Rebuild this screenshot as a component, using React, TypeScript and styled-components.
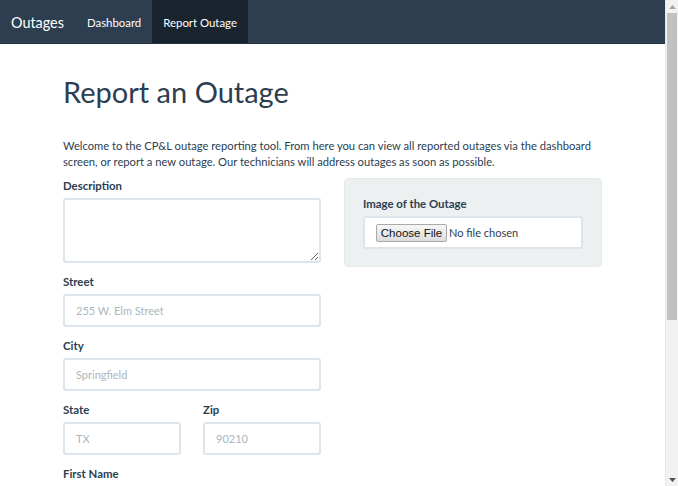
import styled, { createGlobalStyle } from 'styled-components';

const GlobalStyle = createGlobalStyle`
    html, body {
        margin: 0;
        padding: 0;
        background: #ffffff;
        font-family: Lato, "Open Sans", sans-serif;
        color: #2c3e50;
        overflow: hidden;
    }

    input::placeholder, textarea::placeholder {
        color: #acb6c0;
    }
`;

export default function App(): JSX.Element {
    return (
        <>
            <GlobalStyle />
            <Page>
                <Viewport>
                    <Navbar>
                        <Brand href="#">Outages</Brand>
                        <NavLink href="#">Dashboard</NavLink>
                        <NavLink href="#" $active>Report Outage</NavLink>
                    </Navbar>
                    <Container>
                        <Title>Report an Outage</Title>
                        <Intro>
                            Welcome to the CP&amp;L outage reporting tool. From here you can view all reported outages via the dashboard
                            screen, or report a new outage. Our technicians will address outages as soon as possible.
                        </Intro>
                        <Columns>
                            <div>
                                <FormGroup>
                                    <Label>Description</Label>
                                    <TextArea />
                                </FormGroup>
                                <FormGroup>
                                    <Label>Street</Label>
                                    <Input placeholder="255 W. Elm Street" />
                                </FormGroup>
                                <FormGroup>
                                    <Label>City</Label>
                                    <Input placeholder="Springfield" />
                                </FormGroup>
                                <SplitRow>
                                    <FormGroup>
                                        <Label>State</Label>
                                        <Input placeholder="TX" />
                                    </FormGroup>
                                    <FormGroup>
                                        <Label>Zip</Label>
                                        <Input placeholder="90210" />
                                    </FormGroup>
                                </SplitRow>
                                <FormGroup>
                                    <Label>First Name</Label>
                                    <Input placeholder="John" />
                                </FormGroup>
                                <FormGroup>
                                    <Label>Last Name</Label>
                                    <Input placeholder="Smith" />
                                </FormGroup>
                                <SubmitButton>Submit</SubmitButton>
                            </div>
                            <div>
                                <Panel>
                                    <Label>Image of the Outage</Label>
                                    <FileBox>
                                        <ChooseButton>Choose File</ChooseButton>
                                        <FileName>No file chosen</FileName>
                                    </FileBox>
                                </Panel>
                            </div>
                        </Columns>
                    </Container>
                </Viewport>
                <Scrollbar>
                    <ScrollButton>
                        <svg width="7" height="4" viewBox="0 0 7 4">
                            <path d="M0 4 L3.5 0 L7 4 Z" fill="#a3a3a3" />
                        </svg>
                    </ScrollButton>
                    <Thumb />
                    <ScrollTrack />
                    <ScrollButton>
                        <svg width="7" height="4" viewBox="0 0 7 4">
                            <path d="M0 0 L3.5 4 L7 0 Z" fill="#505050" />
                        </svg>
                    </ScrollButton>
                </Scrollbar>
            </Page>
        </>
    );
}

const Page = styled.div`
    display: flex;
    height: 100vh;
`;

const Viewport = styled.div`
    flex: 1;
    min-width: 0;
    overflow: hidden;
`;

const Scrollbar = styled.div`
    width: 13px;
    flex: none;
    display: flex;
    flex-direction: column;
    background: #f1f1f1;
    border-left: 1px solid #e6e6e6;
    box-sizing: border-box;
`;

const ScrollButton = styled.div`
    height: 13px;
    display: flex;
    align-items: center;
    justify-content: center;
`;

const Thumb = styled.div`
    height: 307px;
    margin: 0 1px;
    background: #c1c1c1;
`;

const ScrollTrack = styled.div`
    flex: 1;
`;

const Navbar = styled.nav`
    height: 44px;
    background: #2c3e50;
    display: flex;
    align-items: stretch;
    padding-left: 11px;
    border-bottom: 1px solid #243342;
    box-sizing: border-box;
`;

const Brand = styled.a`
    display: flex;
    align-items: center;
    padding-top: 1px;
    color: #ffffff;
    font-size: 14.4px;
    text-decoration: none;
    margin-right: 12px;
`;

const NavLink = styled.a<{ $active?: boolean }>`
    display: flex;
    align-items: center;
    padding: 1px 11px 0;
    color: #ffffff;
    font-size: 11.4px;
    text-decoration: none;
    background: ${({ $active }) => ($active ? '#1a242f' : 'transparent')};
`;

const Container = styled.main`
    width: 539px;
    margin: 0 auto;
    padding-bottom: 34px;
`;

const Title = styled.h1`
    font-size: 29px;
    font-weight: 400;
    line-height: 34px;
    margin: 31px 0 29px;
`;

const Intro = styled.p`
    font-size: 11.2px;
    line-height: 16px;
    margin: 0 0 8px;
`;

const Columns = styled.div`
    display: grid;
    grid-template-columns: 258px 258px;
    column-gap: 23px;
    align-items: start;
`;

const FormGroup = styled.div`
    margin-bottom: 11px;
`;

const Label = styled.label`
    display: block;
    font-size: 11.4px;
    font-weight: 700;
    line-height: 16px;
    margin-bottom: 4px;
`;

const Input = styled.input`
    box-sizing: border-box;
    display: block;
    width: 100%;
    height: 33px;
    padding: 0 11px;
    border: 2px solid #dce4ec;
    border-radius: 3px;
    font-family: Lato, sans-serif;
    font-size: 11px;
    color: #2c3e50;
    outline: none;
`;

const TextArea = styled.textarea`
    box-sizing: border-box;
    display: block;
    width: 100%;
    height: 65px;
    padding: 8px 11px;
    border: 2px solid #dce4ec;
    border-radius: 3px;
    font-family: Lato, sans-serif;
    font-size: 11px;
    outline: none;
`;

const SplitRow = styled.div`
    display: grid;
    grid-template-columns: 118px 118px;
    column-gap: 22px;
`;

const Panel = styled.div`
    background: #ecf0f1;
    border: 1px solid #e4e9eb;
    border-radius: 4px;
    padding: 17px 18px;
`;

const FileBox = styled.div`
    box-sizing: border-box;
    height: 33px;
    display: flex;
    align-items: center;
    padding: 0 11px;
    background: #ffffff;
    border: 2px solid #dce4ec;
    border-radius: 3px;
`;

const ChooseButton = styled.button`
    box-sizing: border-box;
    height: 18px;
    width: 71px;
    padding: 0;
    font-family: Arial, "Liberation Sans", sans-serif;
    font-size: 11.5px;
    color: #111111;
    background: linear-gradient(#f7f7f7, #dddddd);
    border: 1px solid #a9a9a9;
    border-radius: 2px;
`;

const FileName = styled.span`
    margin-left: 2px;
    font-size: 11px;
    color: #2c3e50;
`;

const SubmitButton = styled.button`
    height: 33px;
    padding: 0 14px;
    border: none;
    border-radius: 3px;
    background: #2c3e50;
    color: #ffffff;
    font-family: Lato, sans-serif;
    font-size: 11.4px;
`;
